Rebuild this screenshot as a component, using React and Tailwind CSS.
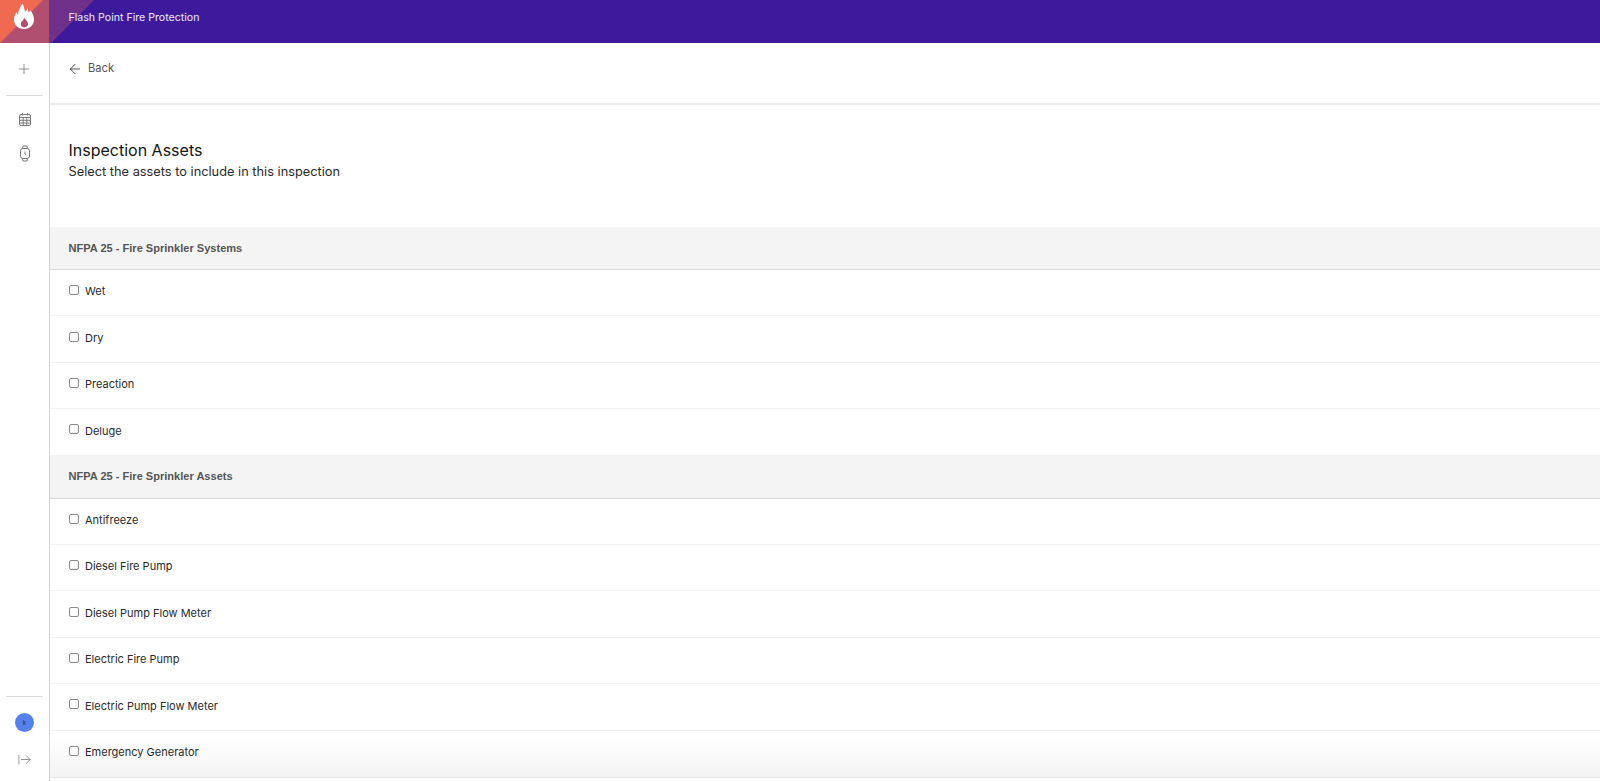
import React from 'react';
import { Plus, ArrowLeft, ArrowRightFromLine } from 'lucide-react';

const groups = [
  { title: 'NFPA 25 - Fire Sprinkler Systems', items: ['Wet', 'Dry', 'Preaction', 'Deluge'] },
  {
    title: 'NFPA 25 - Fire Sprinkler Assets',
    items: ['Antifreeze', 'Diesel Fire Pump', 'Diesel Pump Flow Meter', 'Electric Fire Pump', 'Electric Pump Flow Meter', 'Emergency Generator'],
  },
];

const HeaderArt = () => (
  <svg width="94" height="43" viewBox="0 0 94 43" className="absolute left-0 top-0">
    <rect x="0" y="0" width="49" height="43" fill="#b14f70" />
    <polygon points="0,0 43,0 0,43" fill="#ef6a50" />
    <polygon points="49,0 94,0 51,43 49,43" fill="#6f3189" />
    <path
      d="M23 4c1 3 .8 5 2.500 7.500 1-.8 1.500-2 1.700-3.300 .9 1.700 1.200 3 1.300 4.300 1-.5 1.700-1.300 2-2.300 2 3 3.500 6 3.500 9.300 0 5.200-4 9.500-10 9.500s-10-4.300-10-9.300c0-3 1-5.300 2.700-7.700 .2 1.300 .6 2.200 1.300 3 .2-4.500 2-8 4.500-11Zm1.500 13.500c-.3 1.800-3.700 3.800-3.700 6.500 0 2.100 1.600 3.400 3.600 3.400s3.600-1.300 3.600-3.300c0-2.800-3-4.500-3.500-6.600Z"
      fill="#ffffff"
      fillRule="evenodd"
    />
  </svg>
);

const CalendarGrid = () => (
  <svg width="14" height="15" viewBox="0 0 14 15" fill="none" stroke="currentColor" strokeWidth="1">
    <rect x="1.500" y="2.500" width="11" height="11" rx="1.500" />
    <path d="M1.500 5.500h11M1.500 8.300h11M1.500 11h11M5.200 5.500v8M8.800 5.500v8M4.500 1v2.500M9.500 1v2.500" />
  </svg>
);

const WatchIcon = () => (
  <svg width="14" height="17" viewBox="0 0 14 17" fill="none" stroke="currentColor" strokeWidth="1">
    <rect x="2.500" y="3.500" width="9" height="10" rx="2.500" />
    <path d="M4.500 3.500l.5-2.500h4l.5 2.500M4.500 13.500l.5 2.500h4l.5-2.500M7 6.500v2.500l1.200 1" />
  </svg>
);

const Sidebar = () => (
  <aside className="flex w-[50px] shrink-0 flex-col items-center border-r border-[#d4d4d4] bg-white text-[#7a7a7a]">
    <div className="flex h-[52px] w-full items-center justify-center pr-[1px]">
      <Plus size={16} strokeWidth={1.25} />
    </div>
    <div className="h-px w-[37px] bg-[#d9d9d9]" />
    <div className="mt-[16px] flex flex-col items-center gap-[18px]">
      <CalendarGrid />
      <WatchIcon />
    </div>
    <div className="mt-auto h-px w-[37px] bg-[#d9d9d9]" />
    <div className="mt-[16px] flex h-[19px] w-[19px] items-center justify-center rounded-full bg-[#5581ec] text-[6px] leading-none text-[#1e2a55]">
      k
    </div>
    <div className="mb-[14px] mt-[20px]">
      <ArrowRightFromLine size={15} strokeWidth={1.25} />
    </div>
  </aside>
);

const AssetRow = ({ label }) => (
  <label className="relative flex h-[46.4px] items-center gap-[6px] border-b border-[#f3f3f3] pb-[2px] pl-[19px] text-[11px] text-[#2a2a2a]">
    <span className="mb-[3px] h-[10px] w-[10px] rounded-[2px] border border-[#8a8a8a] bg-white" />
    <span>{label}</span>
  </label>
);

export default function App() {
  return (
    <div className="flex h-[781px] w-[1600px] flex-col overflow-hidden bg-white font-['Inter',sans-serif]">
      <header className="relative flex h-[43px] shrink-0 items-center bg-[#3c1a9b] pb-[8px] pl-[68.500px] text-[10.600px] text-[#eeeaf8]">
        <HeaderArt />
        <span className="relative">Flash Point Fire Protection</span>
      </header>
      <div className="flex min-h-0 flex-1">
        <Sidebar />
        <main className="relative min-w-0 flex-1 overflow-hidden">
          <div className="absolute inset-x-0 bottom-[3px] h-[40px] border-b border-[#e6e6e6] bg-gradient-to-b from-transparent to-[#f3f3f3]" />
          <div className="relative flex h-[62px] items-center gap-[5px] border-b-2 border-[#ececec] pb-[9px] pl-[17px] text-[11.200px] text-[#555555]">
            <ArrowLeft size={16} strokeWidth={1.25} className="text-[#333333]" />
            <span>Back</span>
          </div>
          <div className="h-[122px] pl-[18.500px] pt-[35px]">
            <h1 className="text-[16px] leading-[20px] font-normal text-[#151515]">Inspection Assets</h1>
            <p className="mt-[3px] text-[12.800px] leading-[18px] text-[#2a2a2a]">Select the assets to include in this inspection</p>
          </div>
          {groups.map((group) => (
            <section key={group.title} className="relative">
              <div className="flex h-[43px] items-center border-b border-[#d9d9d9] bg-[#f4f4f4] pl-[18.500px] font-['Liberation_Sans',sans-serif] text-[11.050px] font-bold text-[#555555]">
                {group.title}
              </div>
              {group.items.map((item) => (
                <AssetRow key={item} label={item} />
              ))}
            </section>
          ))}
        </main>
      </div>
    </div>
  );
}
